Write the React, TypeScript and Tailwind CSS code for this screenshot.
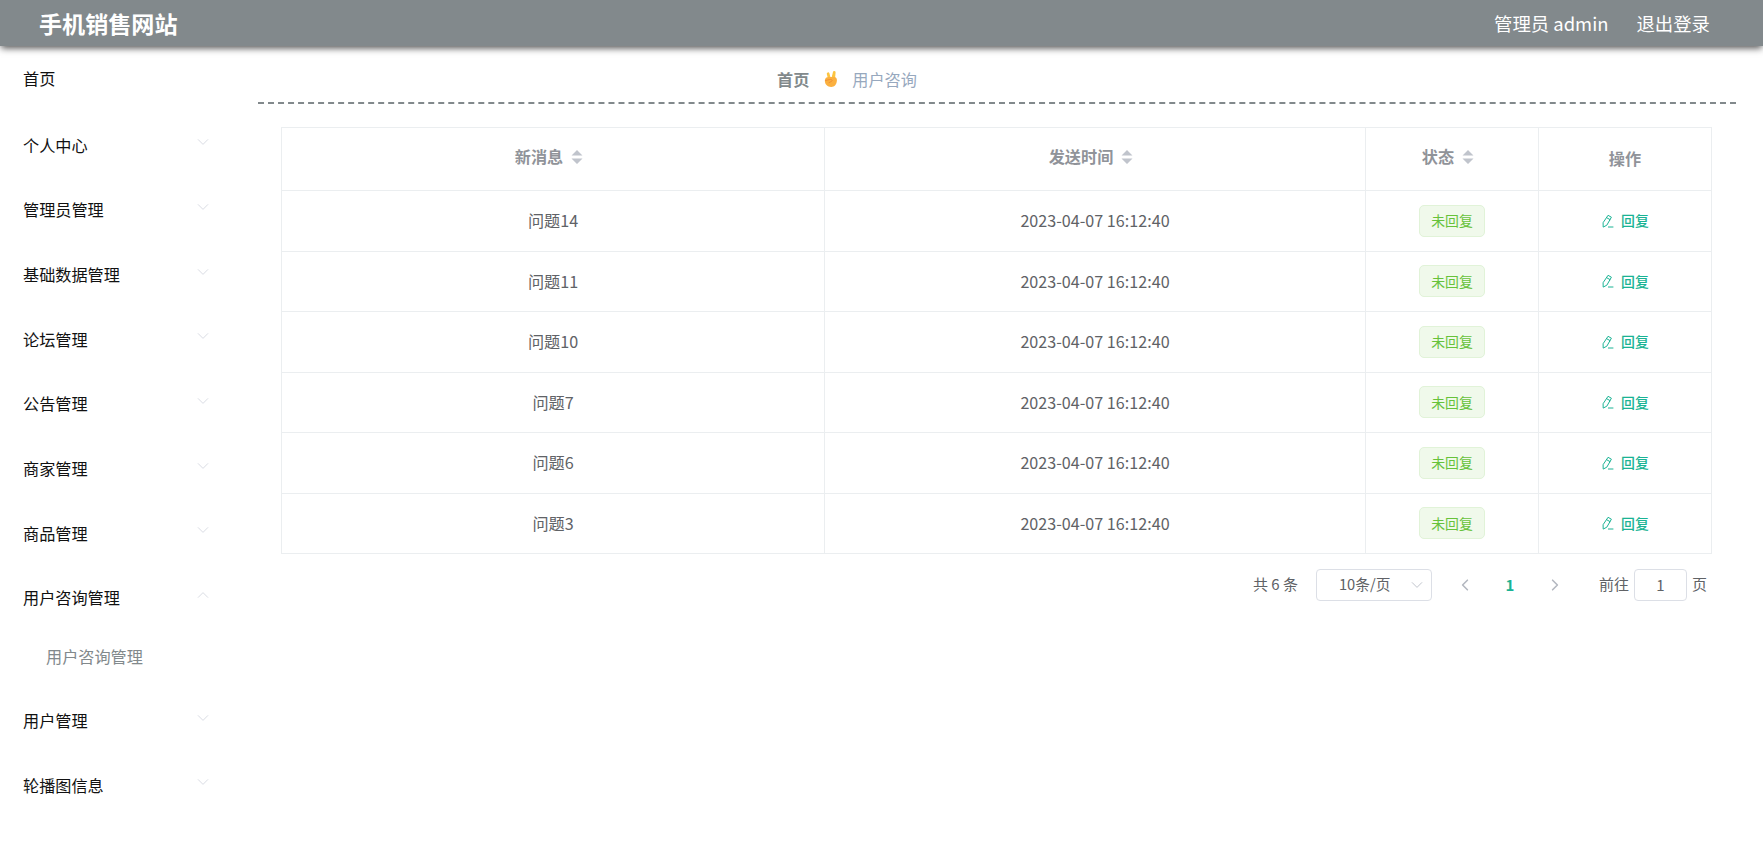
import { useState } from "react";

interface MenuItem {
	label: string;
	children?: string[];
}

const MENU: MenuItem[] = [
	{ label: "个人中心", children: [] },
	{ label: "管理员管理", children: [] },
	{ label: "基础数据管理", children: [] },
	{ label: "论坛管理", children: [] },
	{ label: "公告管理", children: [] },
	{ label: "商家管理", children: [] },
	{ label: "商品管理", children: [] },
	{ label: "用户咨询管理", children: ["用户咨询管理"] },
	{ label: "用户管理", children: [] },
	{ label: "轮播图信息", children: [] },
];

const ROWS = ["问题14", "问题11", "问题10", "问题7", "问题6", "问题3"].map(
	(message) => ({ message, time: "2023-04-07 16:12:40", status: "未回复" }),
);

const COLS = "grid grid-cols-[543px_541px_173px_173px]";

function Chevron({ className = "" }: { className?: string }) {
	return (
		<svg
			viewBox="0 0 12 12"
			fill="none"
			stroke="currentColor"
			strokeLinecap="round"
			strokeLinejoin="round"
			className={`h-3 w-3 ${className}`}
		>
			<path d="M1.2 3.6L6 8.4l4.8-4.8" />
		</svg>
	);
}

function SortIcon() {
	return (
		<svg viewBox="0 0 12 16" className="mt-px mr-2 ml-2 h-4 w-3 fill-[#c0c4cc]">
			<path d="M6 1l5.5 5.5H.5zM6 15L.5 9.5h11z" />
		</svg>
	);
}

function EditIcon() {
	return (
		<svg
			viewBox="0 0 14 14"
			fill="none"
			stroke="currentColor"
			strokeLinejoin="round"
			strokeLinecap="round"
			className="h-3.5 w-3.5"
		>
			<path d="M7.4 1.5l3 1.7-4.6 8-3.6 1.9-.1-4zM6 3.9l3 1.7M7.4 13H12" />
		</svg>
	);
}

function VictoryHand() {
	return (
		<svg viewBox="0 0 16 18" className="h-[18px] w-4">
			<path
				d="M5 9L3.8 4a1.35 1.35 0 012.6-.7L7.8 8.5zM8.400 8.500l1.500-6.300a1.350 1.350 0 012.700.4L12 9z"
				fill="#fcc440"
			/>
			<path
				d="M2.6 8.2c1-1 2.600-1.200 4.300-1.200h4c2.300 0 3.200 1.500 3 3.600-.3 3.900-2.200 6.400-5.700 6.400-3.700 0-6-2.300-6.300-5.400-.1-1.300.1-2.600.7-3.400z"
				fill="#fbb03f"
			/>
			<path
				d="M2.6 10.5l4.2-1c1.700-.4 3.200.9 1.700 1.900l-2.400 1.200"
				fill="none"
				stroke="#ee8a35"
				strokeWidth=".9"
				strokeLinecap="round"
			/>
		</svg>
	);
}

function Header() {
	return (
		<header className="relative flex h-[46px] items-center justify-between bg-[#82898c] pr-[53px] pl-[39px] text-white shadow-[0_3px_7px_-1px_rgba(0,0,0,0.7)]">
			<h1 className="text-[23.1px] leading-[46px] font-bold">手机销售网站</h1>
			<div className="flex gap-7 pb-px text-[18.4px] leading-[46px]">
				<span>管理员 admin</span>
				<button type="button">退出登录</button>
			</div>
		</header>
	);
}

function Sidebar() {
	const [open, setOpen] = useState("用户咨询管理");

	return (
		<nav className="w-[231px] shrink-0 text-[16.15px] text-[#111]">
			<div className="mb-[1.4px] flex h-[65px] items-center pl-[23px]">首页</div>
			{MENU.map((item) => (
				<div key={item.label}>
					<button
						type="button"
						onClick={() => setOpen(open === item.label ? "" : item.label)}
						className="flex h-[64.7px] w-full items-center justify-between pl-[23px] pr-[22px]"
					>
						{item.label}
						<Chevron
							className={`mb-[5px] text-[#d9dce3] ${open === item.label ? "rotate-180" : ""}`}
						/>
					</button>
					{open === item.label &&
						item.children?.map((child) => (
							<div
								key={child}
								className="flex h-[58px] items-center pb-[5px] pl-[46px] text-[#82898c]"
							>
								{child}
							</div>
						))}
				</div>
			))}
		</nav>
	);
}

function MessageTable() {
	const cell = "flex items-center justify-center border-r border-b border-[#ebeef0]";

	return (
		<div className="w-[1431px] border-t border-l border-[#ebeef0] text-[16.15px] text-[#606266]">
			<div className={`${COLS} h-[63px] font-bold text-[#909399]`}>
				{["新消息", "发送时间", "状态"].map((title) => (
					<div key={title} className={`${cell} pb-[5px]`}>
						{title}
						<SortIcon />
					</div>
				))}
				<div className={`${cell} pb-px`}>操作</div>
			</div>
			{ROWS.map((row) => (
				<div key={row.message} className={`${COLS} h-[60.5px]`}>
					<div className={`${cell} pb-px`}>{row.message}</div>
					<div className={`${cell} pb-px`}>{row.time}</div>
					<div className={cell}>
						<span className="flex h-8 w-[66px] items-center justify-center rounded-[5px] border border-[#e1f3d8] bg-[#f0f9eb] text-[13.9px] text-[#67c23a]">
							{row.status}
						</span>
					</div>
					<div className={cell}>
						<button
							type="button"
							className="flex items-center gap-1.5 text-[13.9px] font-medium text-[#1ab394]"
						>
							<EditIcon />
							{row.status.slice(1)}
						</button>
					</div>
				</div>
			))}
		</div>
	);
}

function Pagination() {
	return (
		<div className="mt-[15px] flex h-8 w-[1426px] items-center justify-end text-[15px] text-[#606266]">
			<span className="pb-px">共 6 条</span>
			<div className="ml-[18px] flex h-8 w-[116px] items-center justify-between rounded-[4px] border border-[#dcdfe6] pr-2 pb-px pl-[22px]">
				<span className="text-[14.7px]">10条/页</span>
				<Chevron className="text-[#c0c4cc]" />
			</div>
			<Chevron className="ml-[27px] rotate-90 stroke-[1.6] text-[#b4b8c0]" />
			<span className="w-[78px] text-center font-bold text-[#1ab394]">1</span>
			<Chevron className="-rotate-90 stroke-[1.6] text-[#b4b8c0]" />
			<span className="ml-[38px] pb-px">前往</span>
			<div className="mx-[5px] flex h-8 w-[53px] items-center justify-center rounded-[4px] border border-[#dcdfe6]">
				1
			</div>
			<span className="pb-px">页</span>
		</div>
	);
}

export default function App() {
	return (
		<div className="h-[844px] overflow-hidden bg-white font-['Noto_Sans_CJK_SC',sans-serif]">
			<Header />
			<div className="flex">
				<Sidebar />
				<main className="ml-[27px] w-[1478px]">
					<div className="flex h-[58px] items-center border-b-2 border-dashed border-[#82898c] pt-2.5 pl-[519px] text-[16.15px]">
						<span className="font-bold text-[#82898c]">首页</span>
						<span className="mx-[13.5px]">
							<VictoryHand />
						</span>
						<span className="text-[#97a8be]">用户咨询</span>
					</div>
					<div className="pt-[23px] pl-[23px]">
						<MessageTable />
						<Pagination />
					</div>
				</main>
			</div>
		</div>
	);
}
